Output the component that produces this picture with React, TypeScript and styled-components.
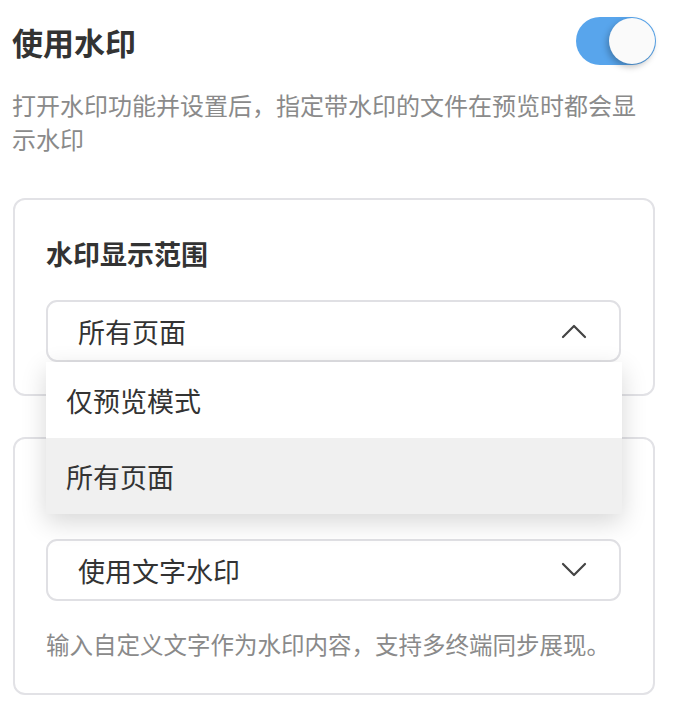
import React, { useState } from "react";
import styled, { createGlobalStyle } from "styled-components";

const GlobalStyle = createGlobalStyle`
  * {
    box-sizing: border-box;
  }
  body {
    margin: 0;
    background: #ffffff;
    font-family: "Noto Sans CJK SC", "Noto Sans", sans-serif;
    color: #333333;
  }
`;

const OPTIONS = ["仅预览模式", "所有页面"];

function Chevron({ up }: { up?: boolean }) {
  return (
    <svg width="26" height="16" viewBox="0 0 26 16" fill="none">
      <path
        d={up ? "M2 14L13 3L24 14" : "M2 2L13 13L24 2"}
        stroke="#444"
        strokeWidth="2.2"
        strokeLinecap="round"
        strokeLinejoin="round"
      />
    </svg>
  );
}

function App() {
  const [enabled, setEnabled] = useState(true);
  const [range, setRange] = useState("所有页面");
  const [open, setOpen] = useState(true);

  return (
    <Page>
      <GlobalStyle />
      <HeaderRow>
        <Title>使用水印</Title>
        <Switch $on={enabled} onClick={() => setEnabled(!enabled)}>
          <Knob $on={enabled} />
        </Switch>
      </HeaderRow>
      <Description>
        打开水印功能并设置后，指定带水印的文件在预览时都会显示水印
      </Description>

      <Card>
        <CardTitle>水印显示范围</CardTitle>
        <SelectWrap>
          <SelectBox onClick={() => setOpen(!open)}>
            <span>{range}</span>
            <Chevron up={open} />
          </SelectBox>
          {open && (
            <Menu>
              {OPTIONS.map((opt) => (
                <MenuItem
                  key={opt}
                  $active={opt === range}
                  onClick={() => {
                    setRange(opt);
                    setOpen(false);
                  }}
                >
                  {opt}
                </MenuItem>
              ))}
            </Menu>
          )}
        </SelectWrap>
      </Card>

      <Card>
        <CardTitle>水印类型</CardTitle>
        <SelectWrap>
          <SelectBox>
            <span>使用文字水印</span>
            <Chevron />
          </SelectBox>
        </SelectWrap>
        <Help>输入自定义文字作为水印内容，支持多终端同步展现。</Help>
      </Card>
    </Page>
  );
}

export default App;

const Page = styled.div`
  width: 676px;
  padding: 16px 20px 20px 12px;
`;

const HeaderRow = styled.div`
  display: flex;
  align-items: center;
  justify-content: space-between;
  height: 50px;
`;

const Title = styled.h1`
  margin: 0;
  font-size: 31px;
  font-weight: 700;
  line-height: 1;
  color: #333333;
`;

const Switch = styled.div<{ $on: boolean }>`
  position: relative;
  width: 80px;
  height: 48px;
  border-radius: 24px;
  background: ${(p) => (p.$on ? "#58a5ec" : "#d8d8d8")};
  cursor: pointer;
`;

const Knob = styled.div<{ $on: boolean }>`
  position: absolute;
  top: 1px;
  left: ${(p) => (p.$on ? "33px" : "1px")};
  width: 46px;
  height: 46px;
  border-radius: 50%;
  background: #fafafa;
  box-shadow: -2px 3px 6px rgba(0, 0, 0, 0.25);
`;

const Description = styled.p`
  margin: 22px 0 0;
  font-size: 24px;
  line-height: 34px;
  color: #8a8a8a;
`;

const Card = styled.section`
  margin: 42px 1px 0 1px;
  padding: 35px 32px 32px 31px;
  border: 2px solid #e2e2e6;
  border-radius: 12px;

  & + & {
    margin-top: 41px;
  }
`;

const CardTitle = styled.h2`
  margin: 0 0 27px;
  font-size: 27px;
  font-weight: 700;
  line-height: 38px;
  color: #333333;
`;

const SelectWrap = styled.div`
  position: relative;
`;

const SelectBox = styled.div`
  display: flex;
  align-items: center;
  justify-content: space-between;
  height: 62px;
  padding: 0 32px 0 30px;
  border: 2px solid #e0e0e4;
  border-radius: 11px;
  background: #ffffff;
  font-size: 27px;
  color: #333333;
  cursor: pointer;
`;

const Menu = styled.ul`
  position: absolute;
  top: 100%;
  left: 0;
  right: -1px;
  z-index: 10;
  margin: 0;
  padding: 0;
  list-style: none;
  background: #ffffff;
  box-shadow: 0 8px 24px rgba(0, 0, 0, 0.16);
`;

const MenuItem = styled.li<{ $active: boolean }>`
  display: flex;
  align-items: center;
  height: 76px;
  padding-left: 20px;
  font-size: 27px;
  color: #333333;
  background: ${(p) => (p.$active ? "#f0f0f0" : "#ffffff")};
  cursor: pointer;
`;

const Help = styled.p`
  margin: 26px 0 0;
  font-size: 23.5px;
  line-height: 34px;
  color: #8a8a8a;
  white-space: nowrap;
`;
